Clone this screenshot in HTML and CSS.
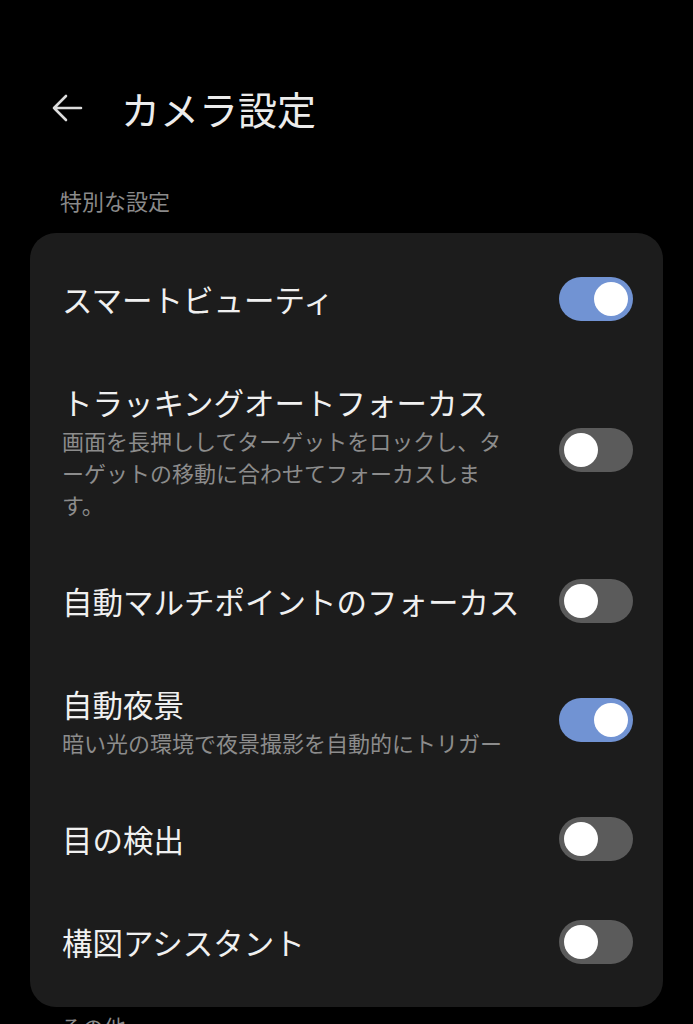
FILE: index.html
```html
<!DOCTYPE html>
<html lang="ja">
<head>
  <meta charset="UTF-8">
  <meta name="viewport" content="width=device-width, initial-scale=1.0">
  <title>カメラ設定</title>
  <link rel="stylesheet" href="styles.css">
</head>
<body>
  <header class="header">
    <span class="back">
      <svg width="32" height="30" viewBox="0 0 32 30">
        <path d="M3 15 H30 M15 3 L3 15 L15 27" fill="none" stroke="#dcdcdc" stroke-width="2.6" stroke-linecap="round" stroke-linejoin="round"/>
      </svg>
    </span>
    <h1 class="title">カメラ設定</h1>
  </header>

  <div class="section-label">特別な設定</div>

  <div class="card">
    <div class="row">
      <div class="text">
        <div class="row-title">スマートビューティ</div>
      </div>
      <span class="toggle on"></span>
    </div>

    <div class="row">
      <div class="text">
        <div class="row-title">トラッキングオートフォーカス</div>
        <div class="row-desc">画面を長押ししてターゲットをロックし、ターゲットの移動に合わせてフォーカスします。</div>
      </div>
      <span class="toggle"></span>
    </div>

    <div class="row">
      <div class="text">
        <div class="row-title">自動マルチポイントのフォーカス</div>
      </div>
      <span class="toggle"></span>
    </div>

    <div class="row">
      <div class="text">
        <div class="row-title">自動夜景</div>
        <div class="row-desc">暗い光の環境で夜景撮影を自動的にトリガー</div>
      </div>
      <span class="toggle on"></span>
    </div>

    <div class="row">
      <div class="text">
        <div class="row-title">目の検出</div>
      </div>
      <span class="toggle"></span>
    </div>

    <div class="row">
      <div class="text">
        <div class="row-title">構図アシスタント</div>
      </div>
      <span class="toggle"></span>
    </div>
  </div>

  <div class="section-label next">その他</div>
</body>
</html>
```

FILE: styles.css
```css
body {
  margin: 0;
  padding: 0;
  background-color: #000;
  font-family: "Noto Sans CJK JP", "Noto Sans", sans-serif;
  color: #eeeeee;
}

.header {
  display: flex;
  align-items: center;
  height: 60px;
  margin-top: 78px;
  padding-left: 51px;
}

.back {
  display: flex;
  width: 32px;
  margin-right: 38px;
}

.title {
  margin: 0;
  font-size: 39px;
  font-weight: 400;
  line-height: 60px;
  color: #ececec;
}

.section-label {
  margin: 47px 0 18px 60px;
  font-size: 22px;
  line-height: 30px;
  color: #8a8a8a;
}

.section-label.next {
  margin-top: 4px;
}

.card {
  margin: 0 30px;
  padding: 14px 0;
  background-color: #1c1c1c;
  border-radius: 26px;
}

.row {
  display: flex;
  align-items: center;
  gap: 38px;
  padding: 29.5px 30px 29.5px 32px;
}

.text {
  flex: 1;
}

.row-title {
  font-size: 30.5px;
  line-height: 44px;
  color: #f0f0f0;
}

.row-desc {
  font-size: 22px;
  line-height: 32px;
  color: #8c8c8c;
}

.toggle {
  position: relative;
  flex: none;
  width: 74px;
  height: 44px;
  border-radius: 22px;
  background-color: #5b5b5b;
}

.toggle::after {
  content: "";
  position: absolute;
  top: 5px;
  left: 5px;
  width: 34px;
  height: 34px;
  border-radius: 50%;
  background-color: #fff;
}

.toggle.on {
  background-color: #7193d3;
}

.toggle.on::after {
  left: 35px;
}
```
